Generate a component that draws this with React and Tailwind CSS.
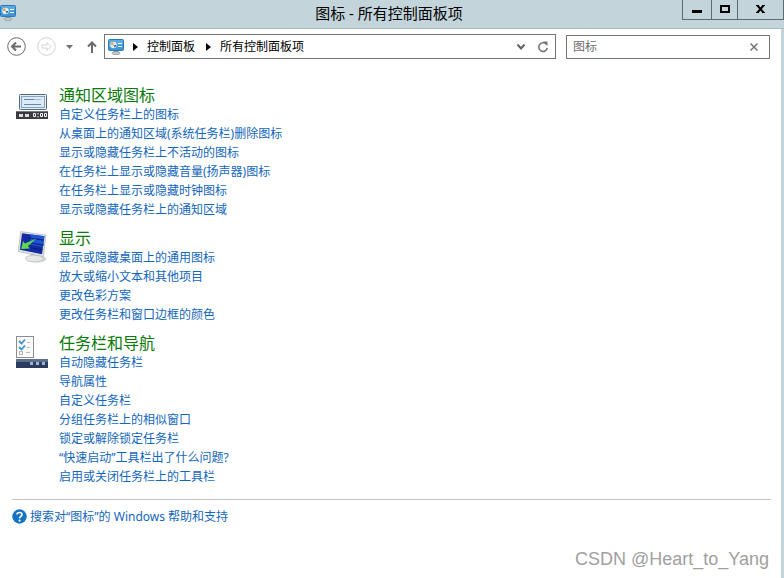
const sections = [
  {
    title: "通知区域图标",
    icon: NotificationIcon,
    links: [
      "自定义任务栏上的图标",
      "从桌面上的通知区域(系统任务栏)删除图标",
      "显示或隐藏任务栏上不活动的图标",
      "在任务栏上显示或隐藏音量(扬声器)图标",
      "在任务栏上显示或隐藏时钟图标",
      "显示或隐藏任务栏上的通知区域",
    ],
  },
  {
    title: "显示",
    icon: DisplayIcon,
    links: [
      "显示或隐藏桌面上的通用图标",
      "放大或缩小文本和其他项目",
      "更改色彩方案",
      "更改任务栏和窗口边框的颜色",
    ],
  },
  {
    title: "任务栏和导航",
    icon: TaskbarIcon,
    links: [
      "自动隐藏任务栏",
      "导航属性",
      "自定义任务栏",
      "分组任务栏上的相似窗口",
      "锁定或解除锁定任务栏",
      "“快速启动”工具栏出了什么问题?",
      "启用或关闭任务栏上的工具栏",
    ],
  },
];

function ControlPanelIcon() {
  return (
    <svg width="16" height="16" viewBox="0 0 16 16" aria-hidden="true" className="shrink-0">
      <rect x="0.5" y="0.5" width="15" height="11" rx="1" fill="#3f97d6" stroke="#2f78b4" />
      <path d="M1 1h14v4L1 8z" fill="#5aabe2" />
      <circle cx="5.5" cy="6" r="3.2" fill="#e4f0f8" />
      <path d="M5.500 6V3.300A2.700 2.700 0 0 0 2.800 6z" fill="#e9a13b" />
      <path d="M5.500 6h2.700a2.700 2.700 0 0 1-1.500 2.400z" fill="#3b6f98" />
      <path d="M10 4.500h4M10 7.500h4" stroke="#fff" />
      <path d="M6 12h4l1 2H5z" fill="#8d989f" />
      <ellipse cx="8" cy="14.200" rx="4" ry="1.500" fill="#c9d0d4" stroke="#87929a" strokeWidth="0.700" />
    </svg>
  );
}

function NotificationIcon() {
  return (
    <svg width="32" height="26" viewBox="0 0 32 26" aria-hidden="true">
      <rect x="3.500" y="0.500" width="27" height="15" rx="1" fill="#e4eef5" stroke="#4f6a80" />
      <rect x="5.500" y="2.500" width="23" height="11" fill="#dceaf5" stroke="#87a3b8" />
      <path d="M8 5.500h10M8 10.500h17" stroke="#5d87a8" />
      <path d="M18 5.500h7" stroke="#9fbbd0" />
      <rect y="17" width="32" height="8" fill="#3c3c40" />
      <rect y="17" width="32" height="1" fill="#77777c" />
      <path d="M3 20h4v3H3zM9 20h4v3H9z" fill="#dcdcdc" />
      <path
        d="M17.500 19.500h2v3h-2zM24.500 19.500h2v3h-2zM28.500 19.500h2v3h-2zM22 19v1.500M22 22v1.500"
        fill="none"
        stroke="#f4f4f4"
      />
    </svg>
  );
}

function DisplayIcon() {
  return (
    <svg width="30" height="32" viewBox="0 0 30 32" aria-hidden="true">
      <ellipse cx="20" cy="28" rx="9.500" ry="3.500" fill="#d3d6d7" />
      <path d="M14 21l9 2v4h-9z" fill="#a9afb2" />
      <ellipse cx="17.500" cy="27.500" rx="9" ry="3.500" fill="#e6e8e8" stroke="#adb3b5" strokeWidth="0.600" />
      <path d="M3.600 0.600L29 4 26.300 25.600 1.300 20.600z" fill="#dfe3e5" stroke="#a5abaf" strokeWidth="0.600" />
      <path d="M5 2.200L27.400 5.200 25 23.200 3 18.800z" fill="#142aa4" />
      <path d="M14 3.400L27.400 5.200 26 16 12.500 13.500z" fill="#1c55d8" />
      <path d="M12 7l15 2.200M11 11.500l15.500 2.600M9 16l16.500 3" stroke="#101f78" strokeWidth="1.200" />
      <path d="M19.500 7.500L11 15l2 2.500-8.800.5L6 10l2 2.500z" fill="#5ed84b" />
    </svg>
  );
}

function TaskbarIcon() {
  return (
    <svg width="32" height="32" viewBox="0 0 32 32" aria-hidden="true">
      <rect x="0.500" y="0.500" width="17" height="21" fill="#fbfbfb" stroke="#8d8d8d" />
      <path d="M3 5l2.500 2.500L9 3.500M3 11l2.500 2.500L9 9.500" fill="none" stroke="#3b93cf" strokeWidth="1.800" />
      <rect x="3.500" y="15.500" width="3" height="3" fill="#fff" stroke="#b5b5b5" />
      <path d="M11 6.500h3M11 11.500h3M10 16.500h4" stroke="#b9b9b9" />
      <rect y="23" width="32" height="9" fill="#2b3c5e" />
      <rect y="23" width="32" height="3" fill="#5b6e90" />
      <path d="M14 26h3v3h-3zM20 26h3v3h-3zM26 26h3v3h-3z" fill="#a7b3c8" />
    </svg>
  );
}

function TitleBar() {
  const button =
    "flex h-5 items-center justify-center border-b border-l border-[#5d6b71] text-black";
  return (
    <header className="relative flex h-[29px] items-start border-b border-[#a9bac0] bg-[#c3d5db]">
      <div className="pt-[5px]">
        <ControlPanelIcon />
      </div>
      <h1 className="absolute inset-x-0 top-0 pr-[6px] text-center text-[15px] leading-[27px] text-black">
        图标 - 所有控制面板项
      </h1>
      <div className="relative ml-auto flex border-r border-[#5d6b71]">
        <button type="button" aria-label="最小化" className={`${button} w-[29px]`}>
          <svg width="12" height="12" viewBox="0 0 12 12">
            <path d="M1 6h10v3H1z" />
          </svg>
        </button>
        <button type="button" aria-label="最大化" className={`${button} w-[26px]`}>
          <svg width="12" height="12" viewBox="0 0 12 12">
            <path d="M2 2h8v6H2z" fill="none" stroke="currentColor" strokeWidth="2" />
          </svg>
        </button>
        <button type="button" aria-label="关闭" className={`${button} w-[46px]`}>
          <svg width="12" height="12" viewBox="0 0 12 12">
            <path d="M2.500 1.500l6 7M8.500 1.500l-6 7" stroke="currentColor" strokeWidth="2" />
            <path d="M1 1.500h3M7 1.500h3M1 8.500h3M7 8.500h3" stroke="currentColor" />
          </svg>
        </button>
      </div>
    </header>
  );
}

function Crumb({ children }) {
  return (
    <>
      <svg width="5" height="8" viewBox="0 0 5 8" aria-hidden="true" className="mr-[9px] ml-2 shrink-0">
        <path d="M0 0l5 4-5 4z" />
      </svg>
      <a href="#" className="whitespace-nowrap text-black">
        {children}
      </a>
    </>
  );
}

function Toolbar() {
  return (
    <div className="flex items-center pt-[5px] pr-[11px] pl-[7px]">
      <button type="button" aria-label="后退">
        <svg width="19" height="19" viewBox="0 0 19 19" fill="none" stroke="#6a6a6a">
          <circle cx="9.500" cy="9.500" r="8.800" />
          <path d="M14 9.500H5.500M9 5.500l-4 4 4 4" strokeWidth="2" />
        </svg>
      </button>
      <button type="button" aria-label="前进" className="ml-[11px]">
        <svg width="19" height="19" viewBox="0 0 19 19" fill="none" stroke="#d4d4d4">
          <circle cx="9.500" cy="9.500" r="8.800" />
          <path d="M5 8h5V5.500l4 4-4 4V11H5z" />
        </svg>
      </button>
      <button type="button" aria-label="最近浏览的位置" className="ml-[10px]">
        <svg width="7" height="4" viewBox="0 0 7 4">
          <path d="M0 0h7L3.500 4z" fill="#707070" />
        </svg>
      </button>
      <button type="button" aria-label="向上" className="ml-[14px]">
        <svg width="10" height="12" viewBox="0 0 10 12" fill="none" stroke="#6a6a6a" strokeWidth="2">
          <path d="M5 12V2M1 5.500l4-4 4 4" />
        </svg>
      </button>
      <nav
        aria-label="地址"
        className="ml-[7px] flex h-[25px] flex-1 items-center border border-[#747474] pr-[6px] pl-[3px]"
      >
        <ControlPanelIcon />
        <span className="w-px" />
        <Crumb>控制面板</Crumb>
        <span className="w-[3px]" />
        <Crumb>所有控制面板项</Crumb>
        <button type="button" aria-label="以前的位置" className="ml-auto">
          <svg width="8" height="6" viewBox="0 0 8 6" fill="none" stroke="#606060" strokeWidth="2">
            <path d="M.5 .5L4 4.500 7.500 .5" />
          </svg>
        </button>
        <button type="button" aria-label="刷新" className="ml-3">
          <svg width="12" height="12" viewBox="0 0 12 12" fill="none" stroke="#757575">
            <path d="M9.500 3.500A4.300 4.300 0 1 0 10.300 7" strokeWidth="1.600" />
            <path d="M6 .5h4.500V5z" fill="#757575" stroke="none" />
          </svg>
        </button>
      </nav>
      <div className="mt-px ml-[10px] flex h-6 w-[204px] items-center border border-[#747474] pr-[11px] pl-[6px]">
        <input
          type="text"
          aria-label="搜索"
          defaultValue="图标"
          className="min-w-0 flex-1 text-[#6d6d6d] outline-none"
        />
        <button type="button" aria-label="清除">
          <svg width="8" height="8" viewBox="0 0 8 8" stroke="#757575" strokeWidth="1.500">
            <path d="M.5 .5l7 7M7.500 .5l-7 7" />
          </svg>
        </button>
      </div>
    </div>
  );
}

function Section({ title, icon: Icon, links }) {
  return (
    <section className="flex">
      <div className="flex w-[43px] shrink-0 justify-start">
        <div className="flex h-[34px] w-8 items-end justify-center">
          <Icon />
        </div>
      </div>
      <div>
        <h2 className="text-base leading-[19px]">
          <a href="#" className="text-[#087a08]">
            {title}
          </a>
        </h2>
        <ul>
          {links.map((link) => (
            <li key={link} className="leading-[19px]">
              <a href="#" className="text-[#1266bd]">
                {link}
              </a>
            </li>
          ))}
        </ul>
      </div>
    </section>
  );
}

export default function App() {
  return (
    <div className="relative flex min-h-screen flex-col border-r-3 border-[#c3d5db] bg-white font-['Noto_Sans','Noto_Sans_CJK_SC',sans-serif] text-xs">
      <div className="-mr-[3px]">
        <TitleBar />
      </div>
      <Toolbar />
      <main className="flex flex-col gap-[10px] px-4 pt-[27px]">
        {sections.map((section) => (
          <Section key={section.title} {...section} />
        ))}
      </main>
      <footer className="mt-[13px] mr-[10px] ml-3 border-t border-[#c3c3c3] pt-[7px]">
        <a href="#" className="flex items-center gap-[3px] leading-[19px] text-[#1266bd]">
          <svg width="15" height="15" viewBox="0 0 15 15" aria-hidden="true">
            <circle cx="7.500" cy="7.500" r="7.200" fill="#1673c4" />
            <path
              d="M5 5.600C5 2.800 10 2.800 10 5.600c0 1.800-2.400 1.800-2.400 3.700"
              fill="none"
              stroke="#fff"
              strokeWidth="1.700"
            />
            <circle cx="7.600" cy="11.600" r="1.100" fill="#fff" />
          </svg>
          搜索对“图标”的 Windows 帮助和支持
        </a>
      </footer>
      <p className="absolute right-3 bottom-[5px] font-['Liberation_Sans',sans-serif] text-lg text-[#a0a0a0]">
        CSDN @Heart_to_Yang
      </p>
    </div>
  );
}
